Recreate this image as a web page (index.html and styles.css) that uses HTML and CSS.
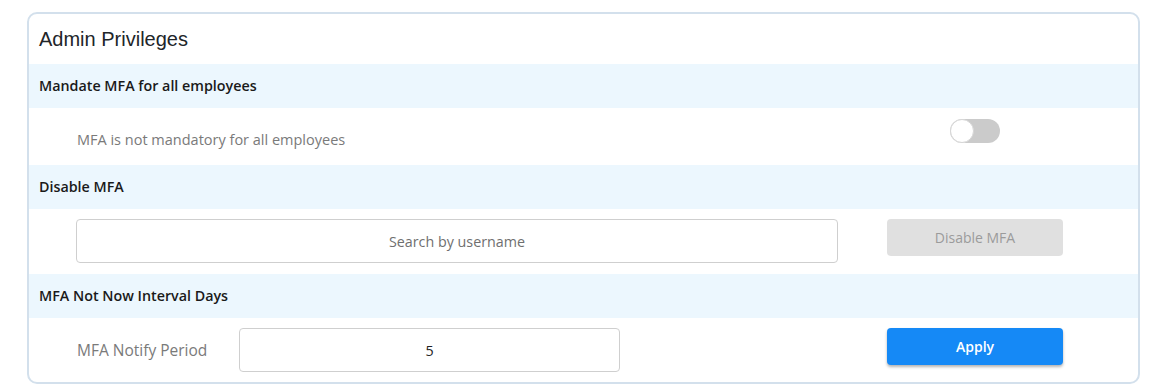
FILE: index.html
```html
<!DOCTYPE html>
<html>
<head>
  <meta charset="utf-8">
  <link rel="stylesheet" href="styles.css">
</head>
<body>
<div class="card">
  <div class="card-title">Admin Privileges</div>

  <div class="band">Mandate MFA for all employees</div>
  <div class="row row-toggle">
    <div class="muted status">MFA is not mandatory for all employees</div>
    <div class="side">
      <span class="toggle"><span class="knob"></span></span>
    </div>
  </div>

  <div class="band">Disable MFA</div>
  <div class="row">
    <input class="field" placeholder="Search by username">
    <div class="side">
      <button class="btn btn-disabled" disabled>Disable MFA</button>
    </div>
  </div>

  <div class="band">MFA Not Now Interval Days</div>
  <div class="row row-last">
    <div class="period">
      <label class="muted period-label" for="period">MFA Notify Period</label>
      <input id="period" class="field field-small" value="5">
    </div>
    <div class="side">
      <button class="btn btn-primary">Apply</button>
    </div>
  </div>
</div>
</body>
</html>
```

FILE: styles.css
```css
body{
  margin:0;
  padding:12px 0 0 27px;
  font-family:"Open Sans","Noto Sans",sans-serif;
  color:#212529;
  background:#fff;
}
.card{
  width:1109px;
  height:368px;
  border:2px solid #d3e0ec;
  border-radius:10px;
  overflow:hidden;
}
.card-title{
  height:50px;
  line-height:50px;
  padding-left:10px;
  font-family:"Liberation Sans",Arial,sans-serif;
  font-size:20px;
  color:#212529;
}
.band{
  height:44px;
  line-height:43px;
  padding-left:10px;
  background:#ecf7fe;
  font-size:14.3px;
  font-weight:600;
  color:#1a1a1a;
}
.row{
  display:grid;
  grid-template-columns:762px 176px;
  column-gap:49px;
  align-items:start;
  padding:10px 0 0 47px;
  height:55px;
}
.row-toggle{
  padding-top:11px;
  height:46px;
}
.row-last{
  height:54px;
}
.muted{
  color:#7a7a7a;
}
.status{
  margin:9px 0 0 1px;
  font-size:14.5px;
  line-height:24px;
}
.side{
  display:flex;
  justify-content:center;
}
.toggle{
  position:relative;
  display:inline-block;
  width:50px;
  height:24px;
  border-radius:12px;
  background:#cbcbcb;
}
.knob{
  position:absolute;
  left:0;
  top:0;
  width:22px;
  height:22px;
  border-radius:50%;
  background:#fff;
  border:1px solid #d6d6d6;
}
.field{
  box-sizing:border-box;
  width:100%;
  height:44px;
  border:1px solid #cfcfcf;
  border-radius:4px;
  font-family:inherit;
  font-size:14.3px;
  text-align:center;
  color:#222;
  outline:none;
}
.field::placeholder{
  color:#6f6f6f;
}
.period{
  display:flex;
  align-items:center;
}
.period-label{
  width:162px;
  padding-left:1px;
  font-size:15.5px;
  line-height:44px;
}
.field-small{
  width:381px;
}
.btn{
  width:176px;
  height:37px;
  border:0;
  border-radius:4px;
  font-family:inherit;
  font-size:14px;
}
.btn-disabled{
  background:#e0e0e0;
  color:#9b9b9b;
}
.btn-primary{
  background:#1589f6;
  color:#fff;
  font-weight:600;
  box-shadow:0 2px 3px rgba(0,0,0,.3);
}
```
